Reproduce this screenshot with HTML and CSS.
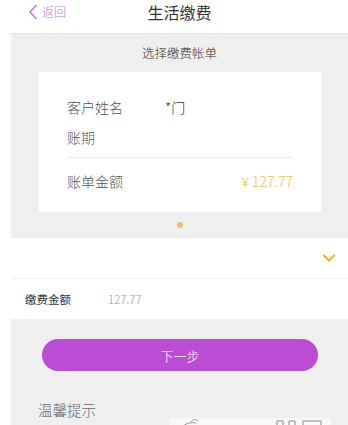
FILE: index.html
```html
<!DOCTYPE html>
<html lang="zh-CN">
<head>
<meta charset="utf-8">
<title>生活缴费</title>
<link rel="stylesheet" href="styles.css">
</head>
<body>
<div class="page">
  <header class="header">
    <a class="back">
      <svg class="back-icon" width="10" height="16" viewBox="0 0 10 16"><path d="M8.5 1 L2 8 L8.5 15" fill="none" stroke="#b77ddb" stroke-width="1.6"/></svg>
      <span>返回</span>
    </a>
    <h1 class="title">生活缴费</h1>
    <span></span>
  </header>

  <section class="bills">
    <div class="bills-title">选择缴费帐单</div>
    <div class="card">
      <div class="row"><span class="label">客户姓名</span><span class="value">*门</span></div>
      <div class="row row-2"><span class="label">账期</span></div>
      <div class="divider"></div>
      <div class="row row-amount"><span class="label">账单金额</span><span class="amount">¥ 127.77</span></div>
    </div>
    <div class="dots"><span class="dot"></span></div>
  </section>

  <section class="form">
    <div class="select-row">
      <svg width="14" height="10" viewBox="0 0 14 10"><path d="M1.5 2 L7 7.5 L12.5 2" fill="none" stroke="#f5b41f" stroke-width="2.2"/></svg>
    </div>
    <div class="pay-row"><span class="pay-label">缴费金额</span><span class="pay-value">127.77</span></div>
  </section>

  <section class="bottom">
    <button class="next">下一步</button>
    <div class="tips">温馨提示</div>
    <div class="promo">
      <svg width="40" height="12" viewBox="0 0 40 12"><path d="M6 12 C8 6 14 4 21 5 M16 4 C18 1 22 1 23 3" fill="none" stroke="#9a9a9a" stroke-width="1"/></svg>
      <svg width="50" height="8" viewBox="0 0 50 8"><path d="M2 7 V3 H8 V7 M14 7 V3 H20 V7 M28 7 V3 H46 V7" fill="none" stroke="#888" stroke-width="1"/></svg>
    </div>
  </section>
</div>
</body>
</html>
```
FILE: styles.css
```css
html, body {
  margin: 0;
  padding: 0;
  background: #fff;
  font-family: "Noto Sans CJK SC", "Noto Sans", sans-serif;
  font-weight: 300;
  color: #333;
  overflow: hidden;
}
.page {
  margin-left: 11px;
  width: 337px;
  height: 425px;
  overflow: hidden;
}
.header {
  height: 33px;
  display: grid;
  grid-template-columns: 1fr auto 1fr;
  align-items: center;
}
.back {
  display: flex;
  align-items: center;
  gap: 4px;
  padding-left: 17px;
  color: #b77ddb;
  font-size: 12px;
  margin-top: -10px;
}
.title {
  margin: -10px 0 0;
  font-size: 16px;
  font-weight: 400;
  color: #333;
}
.bills {
  background: #efefef;
  border-top: 1px solid #e3e3e3;
  height: 204px;
}
.bills-title {
  height: 38px;
  line-height: 38px;
  text-align: center;
  font-size: 12.5px;
  color: #333;
}
.card {
  background: #fff;
  margin: 0 27px 0 28px;
  height: 140px;
  box-sizing: border-box;
  padding: 23px 28px 0 28px;
}
.row {
  display: flex;
  align-items: center;
  height: 24px;
  font-size: 14px;
  color: #555;
}
.label {
  width: 98px;
}
.value {
  color: #333;
}
.row-2 {
  margin-top: 6px;
}
.divider {
  height: 1px;
  background: #ececec;
  margin-top: 8px;
}
.row-amount {
  margin-top: 11px;
  justify-content: space-between;
}
.amount {
  color: #f4c04c;
  font-size: 14px;
}
.dots {
  height: 26px;
  display: flex;
  align-items: center;
  justify-content: center;
}
.dot {
  width: 6px;
  height: 6px;
  border-radius: 50%;
  background: #f5b86b;
}
.form {
  background: #fff;
}
.select-row {
  height: 40px;
  border-bottom: 1px solid #ededed;
  display: flex;
  align-items: center;
  justify-content: flex-end;
  padding-right: 12px;
}
.pay-row {
  height: 40px;
  display: flex;
  align-items: center;
  padding-left: 14px;
  font-size: 11.5px;
}
.pay-label {
  width: 83px;
  color: #333;
  font-weight: 400;
}
.pay-value {
  color: #999;
}
.bottom {
  background: #efefef;
  padding-top: 20px;
  height: 200px;
}
.next {
  display: block;
  margin: 0 0 0 31px;
  width: 276px;
  height: 32px;
  border: none;
  border-radius: 16px;
  background: #bb4cd6;
  color: #fff;
  font-family: inherit;
  font-weight: 300;
  font-size: 13px;
}
.tips {
  margin: 30px 0 0 27px;
  font-size: 14.5px;
  color: #666;
  line-height: 18px;
}
.promo {
  margin: -1px 0 0 158px;
  width: 162px;
  height: 20px;
  background: #f8f8f6;
  display: flex;
  align-items: flex-start;
  justify-content: space-between;
  padding: 0 6px;
  box-sizing: border-box;
}
```
